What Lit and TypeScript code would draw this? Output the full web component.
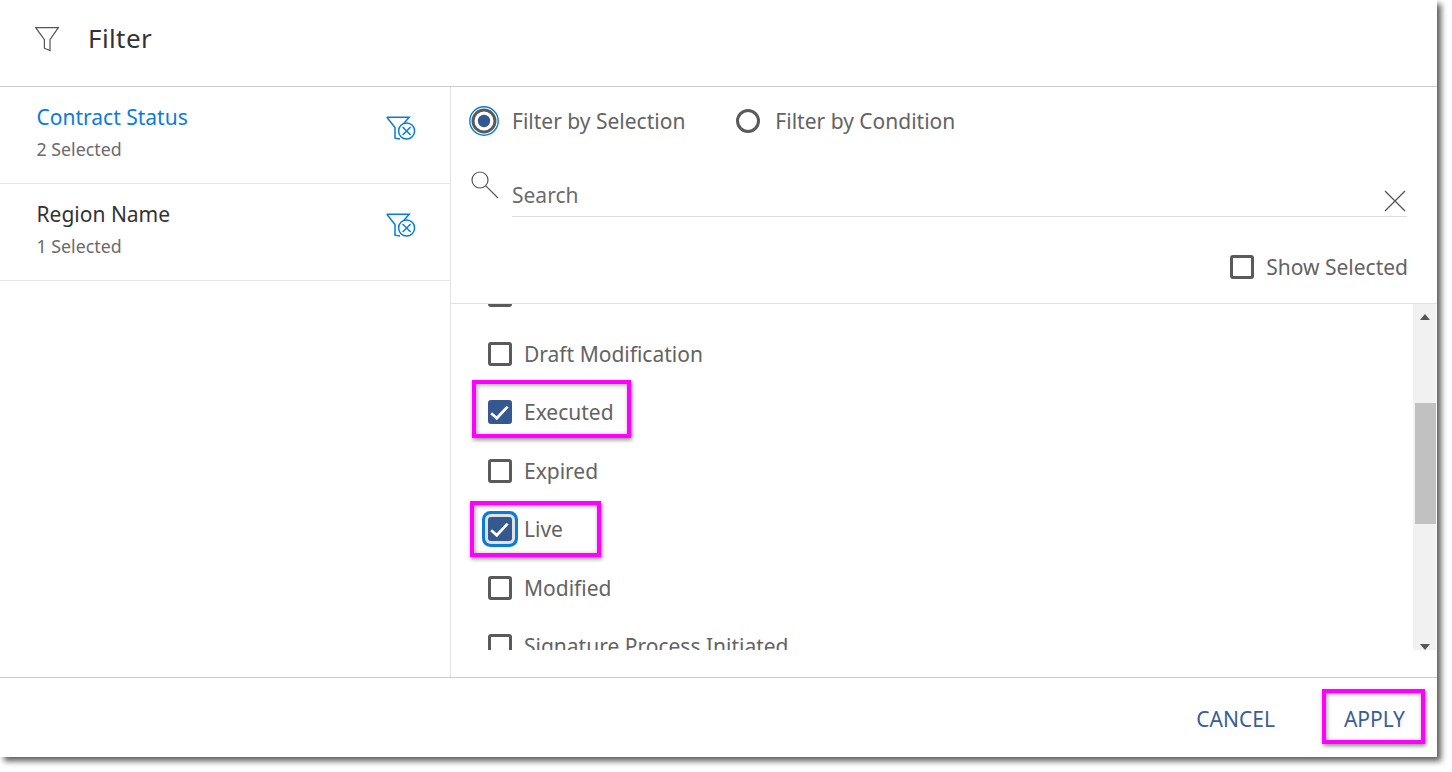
import { LitElement, html, css } from "lit";
import { customElement } from "lit/decorators.js";

const funnelX = html`<svg class="fx" width="32" height="26" viewBox="0 0 32 26" fill="none" stroke="#0b7cd6" stroke-width="1.5">
  <path d="M.8 1.2H23.2L16 9.5M.8 1.2L9 11.5V22.2L14 23" />
  <circle cx="20.6" cy="15" r="8" fill="#fff" />
  <path d="M16.6 11l8 8M24.6 11l-8 8" />
</svg>`;

const check = html`<svg width="24" height="24" viewBox="0 0 24 24" fill="none" stroke="#fff" stroke-width="2.8"><path d="M3.2 13.2L8.8 18.2L19.6 6.6" /></svg>`;

@customElement("app-root")
export class AppRoot extends LitElement {
  static styles = css`
    :host { display: block; width: 1452px; height: 772px; background: #fff; position: relative; overflow: hidden;
      font-family: "Noto Sans", sans-serif; color: #636363; }
    .dialog { width: 1437px; height: 757px; background: #fff; display: flex; flex-direction: column;
      box-shadow: 4px 4px 6px rgba(0,0,0,.65); }
    .head { height: 86px; flex: none; display: flex; align-items: center; padding-left: 35px; gap: 29px;
      border-bottom: 1px solid #ccc; }
    .head svg { margin-top: -8px; }
    .head span { font-size: 26px; color: #333; margin-top: -10px; letter-spacing: .4px; }
    .body { height: 590px; flex: none; display: flex; }
    .left { width: 450px; flex: none; border-right: 1px solid #e2e2e2; }
    .row { height: 80px; border-bottom: 1px solid #e6e6e6; display: flex; justify-content: space-between;
      padding: 16px 32px 0 36.5px; }
    .row .t { font-size: 21px; line-height: 28px; color: #333; }
    .row .s { font-size: 17.8px; line-height: 24px; margin-top: 6px; color: #6b6b6b; }
    .row.active .t { color: #0b7cd6; }
    .fx { margin-top: 13px; }
    .right { flex: 1; display: flex; flex-direction: column; min-width: 0; }
    .radios { height: 68px; flex: none; display: flex; align-items: flex-start; padding-top: 19px; box-sizing: border-box; font-size: 21px; }
    .radios label { display: flex; align-items: center; height: 30px; }
    .radios span { margin-top: -1px; }
    .r1 { width: 30px; height: 30px; margin-left: 18px; margin-right: 13px; }
    .r2 { width: 24px; height: 24px; margin-left: 51px; margin-right: 15px; }
    .search { height: 62px; flex: none; position: relative; display: flex; padding-left: 19px; }
    .search .ic { margin-top: 13px; margin-right: 12px; flex: none; }
    .input { width: 895px; height: 62px; border-bottom: 1px solid #dedede; display: flex; justify-content: space-between;
      box-sizing: border-box; padding-top: 25px; font-size: 21px; line-height: 30px; color: #6b6b6b; }
    .input svg { margin: 10px 1px 0 0; }
    .show { height: 87px; flex: none; border-bottom: 1px solid #e2e2e2; display: flex; justify-content: flex-end;
      padding: 38px 29px 0 0; box-sizing: border-box; gap: 12px; font-size: 21px; line-height: 24px; }
    .cb { width: 24px; height: 24px; flex: none; box-sizing: border-box; border: 3px solid #5a5a5a; border-radius: 3px; background: #fff; }
    .cb.on { border: none; background: #34588f; }
    .cb.focus { box-shadow: 0 0 0 3px #e2e2e2, 0 0 0 6px #0b7cd6; border-radius: 3px; }
    .listwrap { height: 346px; flex: none; display: flex; justify-content: space-between; }
    .list { width: 900px; overflow: hidden; }
    .items { margin-top: -38.4px; padding-left: 37px; }
    .item { height: 58.6px; display: flex; align-items: center; gap: 12px; font-size: 21px; }
    .track { width: 23px; margin-right: 1px; background: #f1f1f1; display: flex; flex-direction: column; align-items: flex-end; }
    .up { width: 0; height: 0; border: 5px solid transparent; border-top: 0; border-bottom: 6px solid #555; margin: 10px 6px 0 0; }
    .thumb { width: 21px; height: 121px; background: #c1c1c1; margin-top: 83px; }
    .down { width: 0; height: 0; border: 5px solid transparent; border-bottom: 0; border-top: 6px solid #555; margin: auto 6px 0 0; }
    .foot { height: 79px; flex: none; border-top: 1px solid #ccc; display: flex; justify-content: flex-end; align-items: center;
      gap: 69px; padding: 0 32px 0 0; font-size: 21px; color: #3a5e94; }
    .foot span { margin-top: 3px; }
    .mark { position: absolute; box-sizing: border-box; border: 4px solid #ff00ff;
      box-shadow: 1px 2px 4px rgba(0,0,0,.45), inset 1px 1px 4px rgba(0,0,0,.4); }
    .m1 { left: 472px; top: 380px; width: 159px; height: 58px; }
    .m2 { left: 470px; top: 501px; width: 131px; height: 56px; }
    .m3 { left: 1322px; top: 689px; width: 103px; height: 55px; }
  `;

  private item(label: string, on = false, focus = false) {
    return html`<div class="item"><div class="cb ${on ? "on" : ""} ${focus ? "focus" : ""}">${on ? check : ""}</div><span>${label}</span></div>`;
  }

  render() {
    return html`
      <div class="dialog">
        <div class="head">
          <svg width="24" height="25" viewBox="0 0 24 25" fill="none" stroke="#555" stroke-width="1.2">
            <path d="M.7.6H23.3L15 12.6V23.6L9.4 21.2V12.6Z" />
          </svg>
          <span>Filter</span>
        </div>
        <div class="body">
          <div class="left">
            <div class="row active"><div><div class="t">Contract Status</div><div class="s">2 Selected</div></div>${funnelX}</div>
            <div class="row"><div><div class="t">Region Name</div><div class="s">1 Selected</div></div>${funnelX}</div>
          </div>
          <div class="right">
            <div class="radios">
              <label>
                <svg class="r1" viewBox="0 0 30 30" fill="none">
                  <circle cx="15" cy="15" r="14.2" stroke="#0b7cd6" stroke-width="1.4" />
                  <circle cx="15" cy="15" r="11" stroke="#5a5a5a" stroke-width="3" />
                  <circle cx="15" cy="15" r="6.2" fill="#34588f" />
                </svg>
                <span>Filter by Selection</span>
              </label>
              <label>
                <svg class="r2" viewBox="0 0 24 24" fill="none"><circle cx="12" cy="12" r="10.5" stroke="#5a5a5a" stroke-width="3" /></svg>
                <span>Filter by Condition</span>
              </label>
            </div>
            <div class="search">
              <svg class="ic" width="30" height="32" viewBox="0 0 30 32" fill="none" stroke="#555" stroke-width="1.2">
                <circle cx="10" cy="12" r="8" /><path d="M15.8 17.8L28 30" />
              </svg>
              <div class="input">
                <span>Search</span>
                <svg width="22" height="22" viewBox="0 0 22 22" fill="none" stroke="#555" stroke-width="1.3"><path d="M1 1L21 21M21 1L1 21" /></svg>
              </div>
            </div>
            <div class="show"><div class="cb"></div><span>Show Selected</span></div>
            <div class="listwrap">
              <div class="list">
                <div class="items">
                  ${this.item("Draft")}
                  ${this.item("Draft Modification")}
                  ${this.item("Executed", true)}
                  ${this.item("Expired")}
                  ${this.item("Live", true, true)}
                  ${this.item("Modified")}
                  ${this.item("Signature Process Initiated")}
                </div>
              </div>
              <div class="track"><div class="up"></div><div class="thumb"></div><div class="down"></div></div>
            </div>
          </div>
        </div>
        <div class="foot"><span>CANCEL</span><span>APPLY</span></div>
      </div>
      <div class="mark m1"></div>
      <div class="mark m2"></div>
      <div class="mark m3"></div>
    `;
  }
}
